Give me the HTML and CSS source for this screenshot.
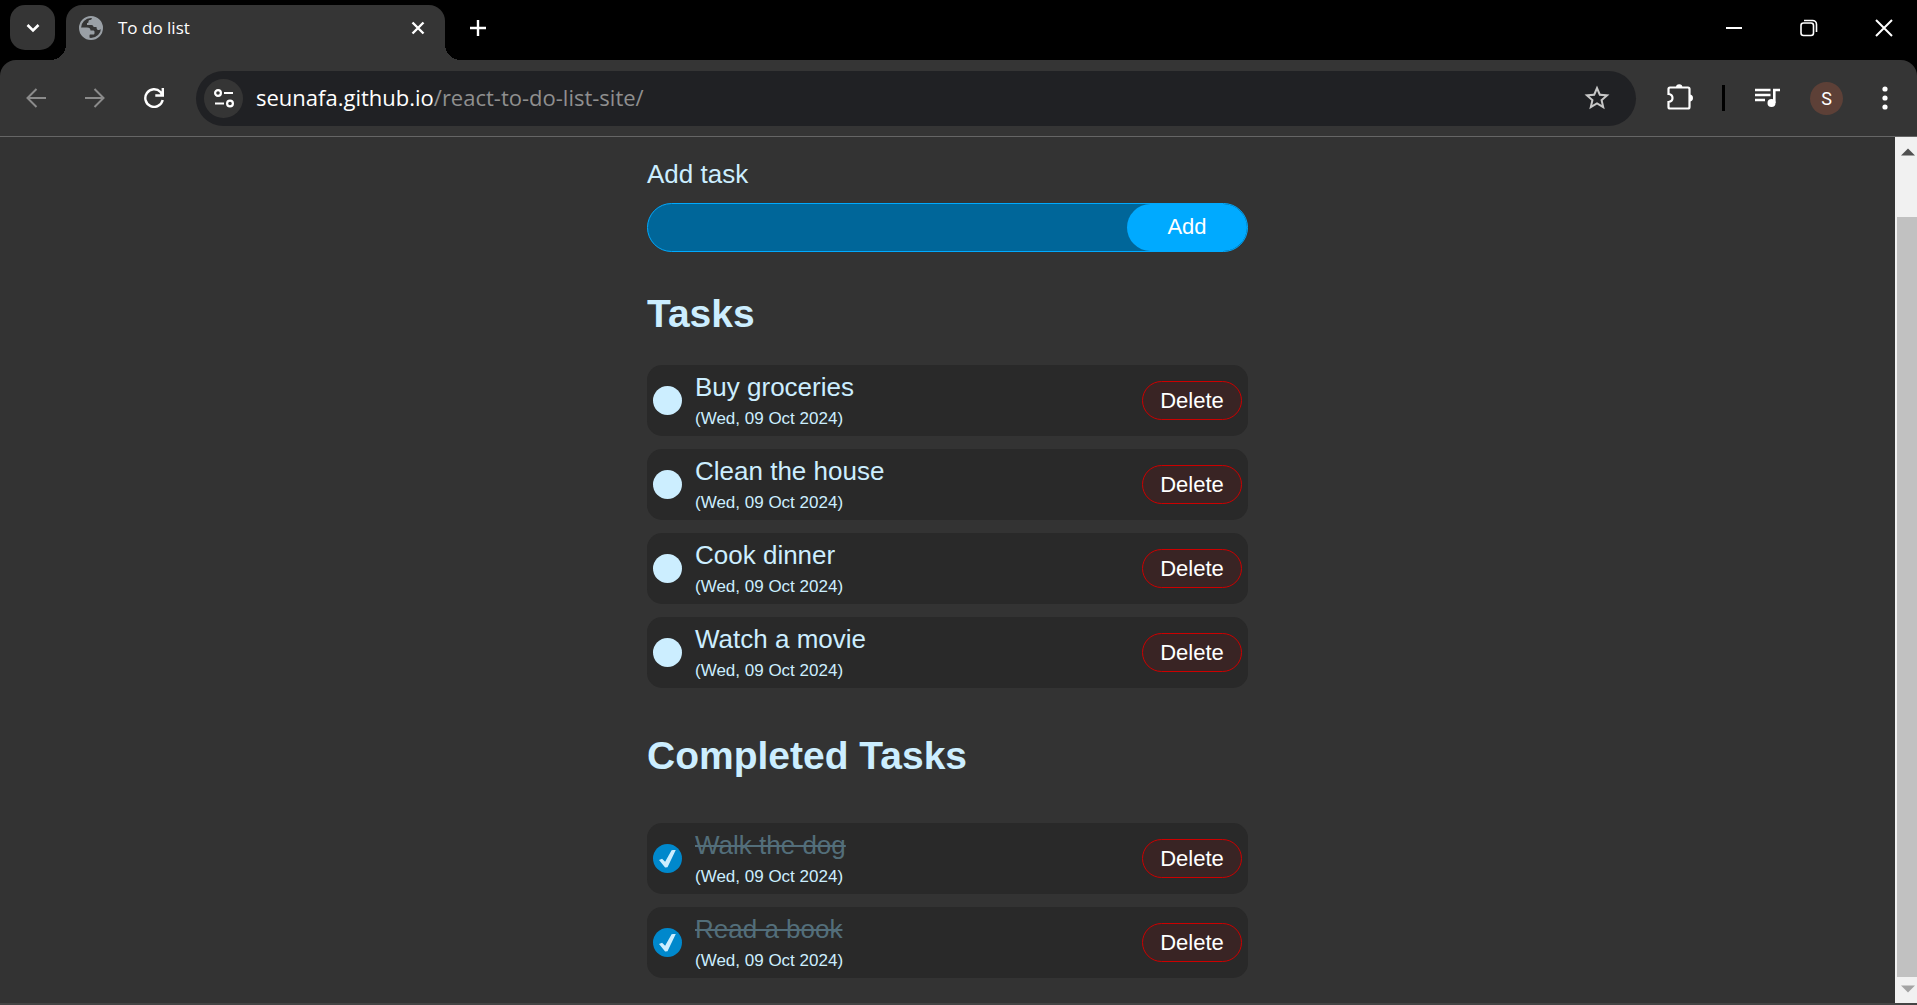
FILE: index.html
```html
<!DOCTYPE html>
<html lang="en">
<head>
<meta charset="utf-8">
<meta name="viewport" content="width=device-width, initial-scale=1">
<title>To do list</title>
<link rel="stylesheet" href="styles.css">
</head>
<body>
<header class="browser">
  <div class="tab-strip">
    <button class="tab-search" type="button" aria-label="Search tabs">
      <svg width="14" height="10" viewBox="0 0 14 10"><path d="M1.500 2l5.500 5.500L12.500 2" fill="none" stroke="#fff" stroke-width="2.600"/></svg>
    </button>
    <div class="tab">
      <svg class="favicon" width="24" height="24" viewBox="0 0 24 24"><circle cx="12" cy="12" r="11" fill="none" stroke="#9aa0a6" stroke-width="2"/><path d="M13 1c0 2-.5 3-2 3-1 0-1.500.5-1.500 1.500S9 7 8 7v2h4.500c1.500 0 2 1 2 2h3c0 2.500 1 3 2.500 3l2.500-1C23.500 7 19 1 13 1zM1.500 11.500H8c2.500 0 3.500 1 3.500 3H14c1 0 1.500.5 1.500 1.500v1c0 1-.5 1.500-1.500 1.500h-2.500c-1 0-1 .5-1 1.500v3C5 22.500 1 18 1.500 11.500z" fill="#9aa0a6"/></svg>
      <span class="tab-title">To do list</span>
      <button class="icon-button" type="button" aria-label="Close tab">
        <svg width="14" height="14" viewBox="0 0 14 14"><path d="M1.500 1.500l11 11m0-11l-11 11" stroke="#fff" stroke-width="2.400"/></svg>
      </button>
    </div>
    <button class="icon-button new-tab" type="button" aria-label="New tab">
      <svg width="16" height="16" viewBox="0 0 16 16"><path d="M8 0v16M0 8h16" stroke="#fff" stroke-width="2.400"/></svg>
    </button>
    <div class="window-controls">
      <button class="icon-button" type="button" aria-label="Minimize">
        <svg width="16" height="16" viewBox="0 0 16 16"><path d="M0 8h16" stroke="#fff" stroke-width="2"/></svg>
      </button>
      <button class="icon-button" type="button" aria-label="Restore">
        <svg width="18" height="18" viewBox="0 0 18 18"><g fill="none" stroke="#fff" stroke-width="1.600"><rect x="1" y="4" width="12.500" height="12.500" rx="2.500"/><path d="M4 1.500h8.500a4 4 0 0 1 4 4V13"/></g></svg>
      </button>
      <button class="icon-button" type="button" aria-label="Close">
        <svg width="18" height="18" viewBox="0 0 18 18"><path d="M1 1l16 16M17 1L1 17" stroke="#fff" stroke-width="2"/></svg>
      </button>
    </div>
  </div>
  <div class="toolbar">
    <nav class="history">
      <button class="icon-button" type="button" aria-label="Back">
        <svg width="20" height="20" viewBox="0 0 20 20"><path d="M20 10H2M10.500 1L1.500 10l9 9" fill="none" stroke="#8b8b8b" stroke-width="2"/></svg>
      </button>
      <button class="icon-button" type="button" aria-label="Forward">
        <svg width="20" height="20" viewBox="0 0 20 20"><path d="M0 10h18M9.500 1l9 9-9 9" fill="none" stroke="#8b8b8b" stroke-width="2"/></svg>
      </button>
      <button class="icon-button" type="button" aria-label="Reload">
        <svg width="20" height="20" viewBox="0 0 20 20"><path d="M18.700 12A8.800 8.800 0 1 1 16.500 4L18.500 7M18.800 0v7.500h-7.500" fill="none" stroke="#fff" stroke-width="2.400"/></svg>
      </button>
    </nav>
    <div class="omnibox">
      <button class="site-info" type="button" aria-label="View site information">
        <svg width="20" height="20" viewBox="0 0 20 20"><g fill="none" stroke="#fff" stroke-width="2.200"><circle cx="4" cy="5" r="2.900"/><path d="M10 5h9M1 15.500h9"/><circle cx="16" cy="15.500" r="2.900"/></g></svg>
      </button>
      <a class="url" href="#">seunafa.github.io<span class="url-path">/react-to-do-list-site/</span></a>
      <button class="icon-button" type="button" aria-label="Bookmark this tab">
        <svg width="30" height="30" viewBox="0 0 24 24"><path d="M22 9.240l-7.190-.62L12 2 9.190 8.630 2 9.240l5.460 4.730L5.820 21 12 17.270 18.180 21l-1.630-7.030L22 9.240zM12 15.400l-3.760 2.270 1-4.280-3.320-2.880 4.380-.38L12 6.100l1.710 4.040 4.380.38-3.320 2.880 1 4.280L12 15.400z" fill="#c7c7c7"/></svg>
      </button>
    </div>
    <div class="actions">
      <button class="icon-button" type="button" aria-label="Extensions">
        <svg width="28" height="28" viewBox="0 0 28 28"><path d="M2.500 5q0-1.500 1.500-1.500h18q1.500 0 1.500 1.500v18q0 1.500-1.500 1.500H4q-1.500 0-1.500-1.500V18q4-.5 4-4t-4-4z" fill="none" stroke="#fff" stroke-width="2.200"/><path d="M10 3.500a3.200 3.200 0 0 1 6.400 0zM23.500 10.500a3.500 3.500 0 0 1 0 7z" fill="#fff"/></svg>
      </button>
      <span class="divider"></span>
      <button class="icon-button" type="button" aria-label="Media controls">
        <svg width="26" height="20" viewBox="0 0 26 20"><path d="M0 2h15.500M0 7h15.500M0 12h10" stroke="#fff" stroke-width="2.400"/><circle cx="16.500" cy="15" r="4" fill="#fff"/><path d="M19.300 15V2H25" fill="none" stroke="#fff" stroke-width="2.600"/></svg>
      </button>
      <button class="avatar" type="button" aria-label="Profile">S</button>
      <button class="icon-button" type="button" aria-label="Menu">
        <svg width="6" height="24" viewBox="0 0 6 24"><g fill="#fff"><circle cx="3" cy="3" r="2.600"/><circle cx="3" cy="12" r="2.600"/><circle cx="3" cy="21" r="2.600"/></g></svg>
      </button>
    </div>
  </div>
</header>
<div class="viewport">
  <main class="app">
    <form class="add-form">
      <label class="add-label" for="task">Add task</label>
      <div class="add-row">
        <input class="add-input" id="task" type="text">
        <button class="add-button" type="button">Add</button>
      </div>
    </form>
    <section class="section">
      <h1 class="heading">Tasks</h1>
      <ul class="tasks">
        <li class="task"><input class="check" type="checkbox" id="t1"><label class="info" for="t1"><span class="name">Buy groceries</span><span class="date">(Wed, 09 Oct 2024)</span></label><button class="delete" type="button">Delete</button></li>
        <li class="task"><input class="check" type="checkbox" id="t2"><label class="info" for="t2"><span class="name">Clean the house</span><span class="date">(Wed, 09 Oct 2024)</span></label><button class="delete" type="button">Delete</button></li>
        <li class="task"><input class="check" type="checkbox" id="t3"><label class="info" for="t3"><span class="name">Cook dinner</span><span class="date">(Wed, 09 Oct 2024)</span></label><button class="delete" type="button">Delete</button></li>
        <li class="task"><input class="check" type="checkbox" id="t4"><label class="info" for="t4"><span class="name">Watch a movie</span><span class="date">(Wed, 09 Oct 2024)</span></label><button class="delete" type="button">Delete</button></li>
      </ul>
    </section>
    <section class="section completed">
      <h1 class="heading">Completed Tasks</h1>
      <ul class="tasks">
        <li class="task"><input class="check" type="checkbox" id="t5" checked><label class="info" for="t5"><span class="name">Walk the dog</span><span class="date">(Wed, 09 Oct 2024)</span></label><button class="delete" type="button">Delete</button></li>
        <li class="task"><input class="check" type="checkbox" id="t6" checked><label class="info" for="t6"><span class="name">Read a book</span><span class="date">(Wed, 09 Oct 2024)</span></label><button class="delete" type="button">Delete</button></li>
      </ul>
    </section>
  </main>
  <div class="scrollbar">
    <svg class="arrow" width="14" height="8" viewBox="0 0 14 8"><path d="M0 7.500L7 .5l7 7z" fill="#505050"/></svg>
    <div class="track"><div class="thumb"></div></div>
    <svg class="arrow" width="14" height="8" viewBox="0 0 14 8"><path d="M0 .5l7 7 7-7z" fill="#a3a3a3"/></svg>
  </div>
</div>
</body>
</html>
```
FILE: styles.css
```css
* {
  box-sizing: border-box;
}

body {
  margin: 0;
  min-height: 100vh;
  display: flex;
  flex-direction: column;
  background: #333;
  color: #cef;
  font-family: "Liberation Sans", Arial, sans-serif;
}

button {
  padding: 0;
  border: 0;
  background: none;
  color: #fff;
  font-family: inherit;
}

svg {
  display: block;
  flex: none;
}

/* Browser frame */
.browser {
  background: #000;
  font-family: "Open Sans", "Noto Sans", sans-serif;
}

.tab-strip {
  display: flex;
  align-items: flex-start;
  height: 60px;
  padding: 5px 10px 0;
}

.icon-button {
  width: 46px;
  height: 46px;
  display: grid;
  place-items: center;
  flex: none;
}

.tab-search {
  width: 45px;
  height: 45px;
  display: grid;
  place-items: center;
  border-radius: 15px;
  background: #353535;
}

.tab {
  position: relative;
  display: flex;
  align-items: center;
  width: 379px;
  height: 55px;
  margin-left: 11px;
  padding: 0 4px 9px 13px;
  border-radius: 16px 16px 0 0;
  background: #353535;
}

.tab::before,
.tab::after {
  content: "";
  position: absolute;
  bottom: 0;
  width: 16px;
  height: 16px;
}

.tab::before {
  right: 100%;
  background: radial-gradient(circle at 0 0, transparent 16px, #353535 16px);
}

.tab::after {
  left: 100%;
  background: radial-gradient(circle at 100% 0, transparent 16px, #353535 16px);
}

.tab-title {
  flex: 1;
  margin-left: 15px;
  color: #fff;
  font-size: 17px;
  line-height: 24px;
}

.new-tab {
  margin-left: 10px;
}

.window-controls {
  display: flex;
  gap: 29px;
  margin-left: auto;
}

.toolbar {
  display: flex;
  align-items: center;
  height: 77px;
  padding: 0 9px 0 13px;
  border-bottom: 1px solid #666;
  border-radius: 16px 16px 0 0;
  background: #353535;
}

.history {
  display: flex;
  gap: 13px;
}

.omnibox {
  flex: 1;
  display: flex;
  align-items: center;
  height: 55px;
  margin-left: 19px;
  padding: 0 16px 0 8px;
  border-radius: 28px;
  background: #202124;
}

.site-info {
  width: 39px;
  height: 39px;
  display: grid;
  place-items: center;
  border-radius: 50%;
  background: #353535;
}

.url {
  flex: 1;
  margin-left: 13px;
  padding-bottom: 2px;
  color: #fff;
  font-size: 22px;
  line-height: 30px;
  text-decoration: none;
}

.url-path {
  color: #8f8f8f;
}

.actions {
  display: flex;
  align-items: center;
  margin-left: 21px;
}

.divider {
  width: 3px;
  height: 26px;
  margin: 0 20px 0 19px;
  background: #000;
}

.avatar {
  width: 33px;
  height: 33px;
  margin: 0 19px;
  border-radius: 50%;
  background: #5d4037;
  font-family: Roboto, sans-serif;
  font-size: 18px;
}

/* Page area and its scrollbar */
.viewport {
  flex: 1;
  display: flex;
  border-bottom: 2px solid #444;
}

.app {
  width: 100%;
  max-width: 601px;
  margin: 0 auto;
  padding: 21px 0 24px;
}

.scrollbar {
  display: flex;
  flex-direction: column;
  align-items: center;
  width: 22px;
  padding: 11px 0 10px;
  background: #f1f1f1;
}

.arrow {
  margin-left: 4px;
}

.track {
  flex: 1;
  align-self: stretch;
  display: flex;
  padding: 61px 0 8px 2px;
}

.thumb {
  flex: 1;
  background: #c1c1c1;
}

/* New task form */
.add-form {
  display: grid;
  gap: 13px;
}

.add-label {
  font-size: 26px;
  line-height: 32px;
}

.add-row {
  display: flex;
  height: 49px;
  border: 1px solid #0af;
  border-radius: 25px;
  background: #069;
  overflow: hidden;
}

.add-input {
  flex: 1;
  min-width: 0;
  padding: 0 24px;
  border: 0;
  outline: 0;
  background: none;
  color: #fff;
  font-size: 22px;
}

.add-button {
  width: 120px;
  padding-bottom: 2px;
  border-radius: 24px;
  background: #0af;
  font-size: 22px;
}

/* Task lists */
.section {
  display: grid;
  gap: 29px;
  margin-top: 40px;
}

.completed {
  gap: 45px;
  margin-top: 46px;
}

.heading {
  margin: 0;
  font-size: 39px;
  line-height: 44px;
}

.tasks {
  display: grid;
  gap: 13px;
  margin: 0;
  padding: 0;
  list-style: none;
}

.task {
  display: flex;
  align-items: center;
  height: 71px;
  padding: 0 6px;
  border-radius: 15px;
  background: #292929;
}

.check {
  appearance: none;
  width: 29px;
  height: 29px;
  margin: 0;
  display: grid;
  place-items: center;
  border-radius: 50%;
  background: #cef;
}

.check:checked {
  background: #08c;
}

.check:checked::before {
  content: "";
  width: 17px;
  height: 18px;
  background: #cef;
  clip-path: polygon(0 58%, 18% 52%, 36% 68%, 74% 4%, 100% 0, 50% 98%, 36% 100%);
}

.info {
  flex: 1;
  display: grid;
  gap: 3px;
  margin-left: 13px;
}

.name {
  font-size: 26px;
  line-height: 34px;
}

.date {
  font-size: 17px;
  line-height: 24px;
}

.check:checked + .info .name {
  color: #536e7a;
  text-decoration: line-through;
}

.delete {
  width: 100px;
  height: 39px;
  border: 1px solid #c00;
  border-radius: 20px;
  background: #392424;
  font-size: 22px;
}
```
